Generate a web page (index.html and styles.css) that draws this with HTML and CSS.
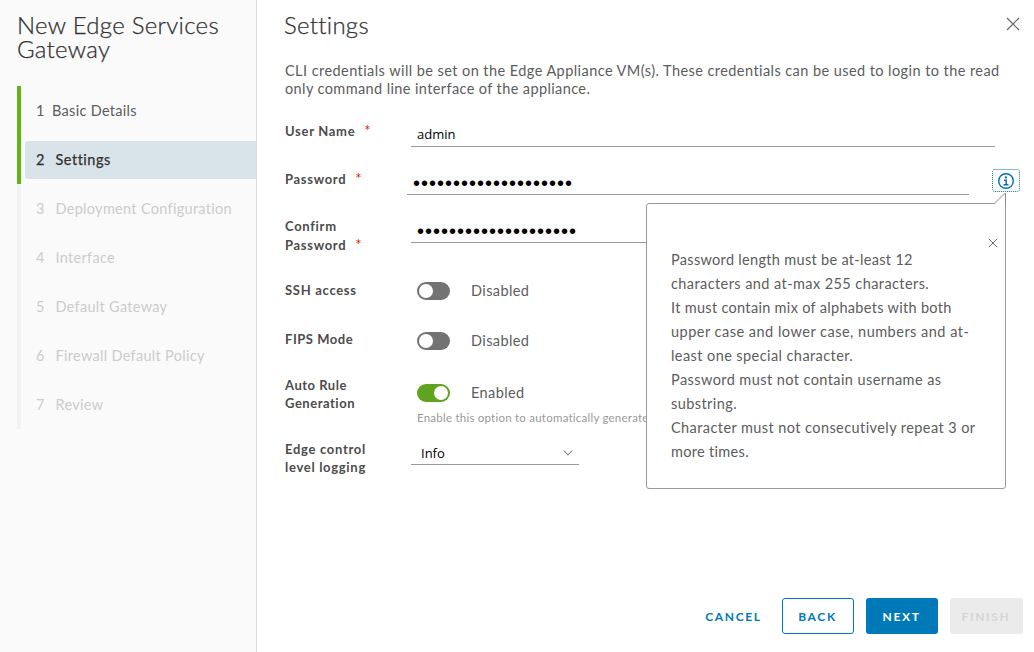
FILE: index.html
```html
<!DOCTYPE html>
<html lang="en">
<head>
<meta charset="utf-8">
<title>New Edge Services Gateway</title>
<link rel="stylesheet" href="styles.css">
</head>
<body>
<div class="wizard">
  <aside class="sidebar">
    <h1 class="wizard-title">New Edge Services<br>Gateway</h1>
    <ol class="steps">
      <li class="step done first"><div class="step-link"><span class="num">1</span><span>Basic Details</span></div></li>
      <li class="step done active"><div class="step-link"><span class="num">2</span><span>Settings</span></div></li>
      <li class="step"><div class="step-link"><span class="num">3</span><span>Deployment Configuration</span></div></li>
      <li class="step"><div class="step-link"><span class="num">4</span><span>Interface</span></div></li>
      <li class="step"><div class="step-link"><span class="num">5</span><span>Default Gateway</span></div></li>
      <li class="step"><div class="step-link"><span class="num">6</span><span>Firewall Default Policy</span></div></li>
      <li class="step"><div class="step-link"><span class="num">7</span><span>Review</span></div></li>
    </ol>
  </aside>
  <main class="content">
    <header class="page-head">
      <h2 class="page-title">Settings</h2>
      <svg class="close" width="14" height="14" viewBox="0 0 14 14"><path d="M1 1 13 13M13 1 1 13" stroke="#666" stroke-width="1.2" fill="none"/></svg>
    </header>
    <p class="desc"><span class="d1">CLI credentials will be set on the Edge Appliance VM(s). These credentials can be used to login to the read</span><br><span class="d2">only command line interface of the appliance.</span></p>
    <form class="form">
      <div class="row user">
        <div class="label">User Name<span class="req">*</span></div>
        <div class="field"><span class="value">admin</span></div>
      </div>
      <div class="row pass">
        <div class="label">Password<span class="req">*</span></div>
        <div class="field inset"><span class="dots">••••••••••••••••••••</span></div>
        <div class="info">
          <svg width="28" height="23" viewBox="0 0 28 23"><rect x=".5" y=".5" width="27" height="22" rx="2" fill="none" stroke="#0072b8" stroke-dasharray="1 1"/><circle cx="14" cy="12" r="7.3" fill="none" stroke="#006fba" stroke-width="1.4"/><circle cx="13.9" cy="8.4" r="1.15" fill="#006fba"/><path d="M12 11.2h2.2v4.4M11.6 15.8h4.8" fill="none" stroke="#006fba" stroke-width="1.4"/></svg>
        </div>
      </div>
      <div class="row confirm">
        <div class="label">Confirm<br>Password<span class="req">*</span></div>
        <div class="field"><span class="dots">••••••••••••••••••••</span></div>
      </div>
      <div class="row ssh">
        <div class="label">SSH access</div>
        <div class="switch"><span class="toggle"></span><span class="state">Disabled</span></div>
      </div>
      <div class="row fips">
        <div class="label">FIPS Mode</div>
        <div class="switch"><span class="toggle"></span><span class="state">Disabled</span></div>
      </div>
      <div class="row auto">
        <div class="label">Auto Rule<br>Generation</div>
        <div class="stack">
          <div class="switch"><span class="toggle on"></span><span class="state">Enabled</span></div>
          <div class="help">Enable this option to automatically generate</div>
        </div>
      </div>
      <div class="row edge">
        <div class="label">Edge control<br>level logging</div>
        <div class="field select"><span class="value">Info</span><svg width="10" height="6" viewBox="0 0 10 6"><path d="M.7.7 5 5 9.3.7" fill="none" stroke="#8c8c8c" stroke-width="1.1"/></svg></div>
      </div>
    </form>
    <footer class="actions">
      <span class="btn link">CANCEL</span>
      <span class="btn outline">BACK</span>
      <span class="btn primary">NEXT</span>
      <span class="btn disabled">FINISH</span>
    </footer>
  </main>
  <div class="popover">
    <svg class="pointer" width="12" height="12" viewBox="0 0 12 12"><path d="M0 11.5 11.5 0V12H0Z" fill="#fff"/><path d="M.5 10.5 11 0" fill="none" stroke="#bbb" stroke-width="1.2"/><path d="M11.5 0V12" stroke="#8c8c8c"/></svg>
    <svg class="pop-close" width="10" height="10" viewBox="0 0 10 10"><path d="M.8.8 9.2 9.2M9.2.8.8 9.2" stroke="#6b6b6b" fill="none"/></svg>
    <div class="rules">
      <span>Password length must be at-least 12</span>
      <span class="loose">characters and at-max 255 characters.</span>
      <span>It must contain mix of alphabets with both</span>
      <span class="looser">upper case and lower case, numbers and at-</span>
      <span class="loose">least one special character.</span>
      <span class="loose">Password must not contain username as</span>
      <span class="loose">substring.</span>
      <span class="loose">Character must not consecutively repeat 3 or</span>
      <span>more times.</span>
    </div>
  </div>
</div>
</body>
</html>
```
FILE: styles.css
```css
* { box-sizing: border-box; }
body { margin: 0; font-family: Lato, "Open Sans", sans-serif; font-size: 14.5px; color: #5c5c5c; background: #fff; }
.wizard { position: relative; display: flex; width: 1034px; height: 652px; overflow: hidden; white-space: nowrap; }
.sidebar { width: 257px; background: #fafafa; border-right: 1px solid #ddd; padding: 13px 0 0 17px; }
.wizard-title, .page-title { margin: 0; font-weight: 300; font-size: 24px; line-height: 24px; color: #313131; letter-spacing: .28px; -webkit-text-stroke: .25px; }
.wizard-title { height: 73px; }
.steps { list-style: none; margin: 0; padding: 0; }
.step { height: 49px; border-left: 4px solid #f2f2f2; padding: 6px 0 5px 4px; color: #ccc; }
.step.done { border-color: #60b515; color: #5c5c5c; }
.step-link { height: 38px; display: flex; align-items: center; gap: 10.5px; padding: 0 0 2px 11px; border-radius: 3px 0 0 3px; letter-spacing: .3px; }
.num { width: 9px; }
.first .step-link { gap: 7px; }
.active .step-link { background: #d9e4ea; color: #313131; letter-spacing: .5px; -webkit-text-stroke: .25px; }
.content { flex: 1; display: flex; flex-direction: column; padding: 13px 11px 18px 28px; }
.page-head { display: flex; justify-content: space-between; height: 49px; padding-right: 3px; }
.page-title { margin-left: -1px; }
.close { margin-top: 4px; }
.desc { margin: 0; line-height: 18px; height: 61px; }
.d1 { letter-spacing: .432px; }
.d2 { letter-spacing: .39px; }
.form { flex: 1; }
.row { display: flex; height: 48px; }
.user { height: 48px; }
.pass { height: 47px; }
.confirm { height: 64px; }
.ssh { height: 49px; }
.fips { height: 46px; }
.auto { height: 64px; }
.label { width: 126px; margin-top: -1px; font-size: 13px; line-height: 18px; font-weight: 700; color: #4c4c4c; letter-spacing: .7px; }
.confirm .label { line-height: 18.5px; }
.fips .label, .auto .label { letter-spacing: .52px; }
.req { color: #e12200; margin-left: 9px; font-weight: 400; font-size: 15px; line-height: 1; }
.field { width: 584px; height: 24px; border-bottom: 1px solid #9a9a9a; padding-left: 6px; display: flex; color: #000; line-height: 23px; }
.inset { width: 562px; margin-left: -4px; }
.confirm .field { height: 25px; }
.value { font-size: 13px; font-family: "Open Sans", sans-serif; }
.dots { font-family: "Liberation Sans", sans-serif; font-size: 20px; letter-spacing: 1px; padding-top: 1px; }
.confirm .dots { padding-top: 2px; }
.info { margin: -2px 0 0 23px; height: 23px; }
.switch { display: flex; align-items: center; height: 18px; margin-left: 6px; gap: 21px; }
.fips .switch { margin-top: 1px; }
.toggle { width: 33px; height: 18px; border-radius: 9px; background: #737373; padding: 2px; display: flex; }
.toggle::before { content: ""; width: 14px; height: 14px; border-radius: 50%; background: #fff; }
.toggle.on { background: #60a31e; justify-content: flex-end; }
.state { letter-spacing: .4px; padding-bottom: 2px; }
.auto .switch { margin-top: 7px; }
.help { font-size: 11.5px; line-height: 16px; letter-spacing: .23px; margin: 8px 0 0 6px; color: #9a9a9a; }
.select { width: 168px; padding: 0 6px 0 10px; align-items: center; justify-content: space-between; }
.select .value { padding-top: 2px; }
.actions { display: flex; justify-content: flex-end; gap: 12px; }
.btn { height: 36px; width: 72px; border-radius: 3px; display: flex; align-items: center; justify-content: center; padding-right: 1px; font-size: 12px; font-weight: 700; letter-spacing: 1.65px; color: #0079b8; }
.link { width: 74px; margin-right: -1px; }
.outline { border: 1px solid #0079b8; }
.primary { background: #0079b8; color: #fff; }
.disabled { width: 73px; background: #ebebeb; color: #d6d6d6; }
.popover { position: absolute; left: 646px; top: 203px; width: 360px; height: 286px; border: 1px solid #9a9a9a; border-radius: 3px 0 3px 3px; background: #fff; padding: 44px 0 0 24px; }
.pointer { position: absolute; right: -1px; top: -11px; }
.pop-close { position: absolute; left: 341px; top: 34px; }
.rules { display: flex; flex-direction: column; align-items: flex-start; line-height: 24px; letter-spacing: .31px; }
.loose { letter-spacing: .42px; }
.looser { letter-spacing: .49px; }
```
